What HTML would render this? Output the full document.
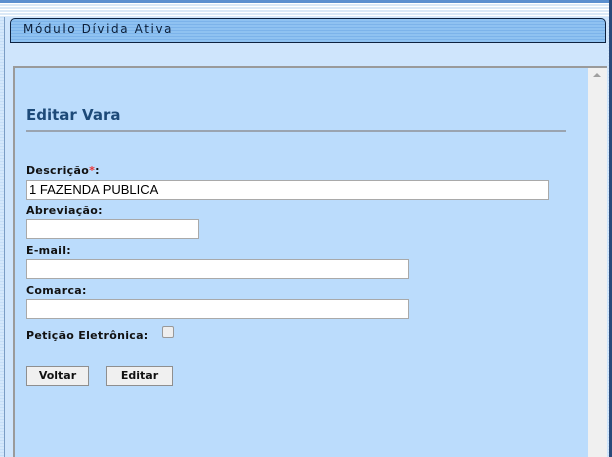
<!DOCTYPE html>
<html><head><meta charset="utf-8"><style>
body{margin:0;width:612px;height:457px;overflow:hidden;position:relative;font-family:"DejaVu Sans",Verdana,sans-serif;
background:repeating-linear-gradient(#d4e8fc 0 2px,#c6def7 2px 3px);}
.abs{position:absolute}
.top{left:0;top:0;width:612px;height:3px;background:#5b8fcf}
.top2{left:0;top:3px;width:612px;height:14px;background:repeating-linear-gradient(#fff 0 1px,#dbe9f7 1px 3px)}
.leftl{left:4px;top:17px;width:1px;height:440px;background:#7a9cc4}
.main{left:5px;top:10px;width:603px;height:447px;background:#cfe5fc}
.hdr{left:10px;top:18px;height:23px;border:1px solid #0d2240;border-radius:5px 5px 0 0;
background:repeating-linear-gradient(#8fc2f1 0 2px,#7cb3ea 2px 3px);font-size:12px;letter-spacing:1.6px;color:#0b1f3a;line-height:21px;padding-left:12px;width:582px}
.frame{left:13px;top:66px;width:594px;height:391px;background:#bbdcfc;border-top:2px solid #9a9a9a;border-left:2px solid #9a9a9a;box-sizing:border-box}
.sb{left:588px;top:68px;width:19px;height:389px;background:#f0f0f0}
.rt{left:609px;top:0;width:3px;height:457px;background:#2a4a7a}
h2{position:absolute;left:26px;top:106px;margin:0;font-size:15px;font-weight:bold;color:#1d4a78}
.hr{left:26px;top:130px;width:540px;height:2px;background:#9aa4b0}
.lb{position:absolute;left:26px;font-size:11px;font-weight:bold;color:#111;letter-spacing:0.3px}
.in{position:absolute;left:26px;height:20px;background:#fff;border:1px solid #a9a9a9;box-sizing:border-box;font-family:"Liberation Sans",Arial,sans-serif;font-size:13px;padding-left:2px;line-height:18px}
.btn{position:absolute;top:366px;height:20px;background:#f0f0f0;border:1px solid #8f8f8f;box-sizing:border-box;font-size:11px;font-weight:bold;text-align:center;line-height:18px;color:#111}
</style></head><body>
<div class="abs main"></div>
<div class="abs top"></div><div class="abs top2"></div>
<div class="abs leftl"></div>
<div class="abs rt"></div>
<div class="abs hdr">Módulo Dívida Ativa</div>
<div class="abs frame"></div>
<div class="abs sb"></div>
<div class="abs" style="left:593px;top:73px;width:0;height:0;border-left:4px solid transparent;border-right:4px solid transparent;border-bottom:4px solid #a0a0a0"></div>
<h2>Editar Vara</h2>
<div class="abs hr"></div>
<div class="lb" style="top:164px">Descrição<span style="color:#e33">*</span>:</div>
<div class="in" style="top:180px;width:523px">1 FAZENDA PUBLICA</div>
<div class="lb" style="top:204px">Abreviação:</div>
<div class="in" style="top:219px;width:173px"></div>
<div class="lb" style="top:244px">E-mail:</div>
<div class="in" style="top:259px;width:383px"></div>
<div class="lb" style="top:284px">Comarca:</div>
<div class="in" style="top:299px;width:383px"></div>
<div class="lb" style="top:329px">Petição Eletrônica:</div>
<div class="abs" style="left:162px;top:326px;width:12px;height:12px;border:1px solid #999;border-radius:2px;background:#eee;box-sizing:border-box"></div>
<div class="btn" style="left:26px;width:63px">Voltar</div>
<div class="btn" style="left:106px;width:67px">Editar</div>
</body></html>
